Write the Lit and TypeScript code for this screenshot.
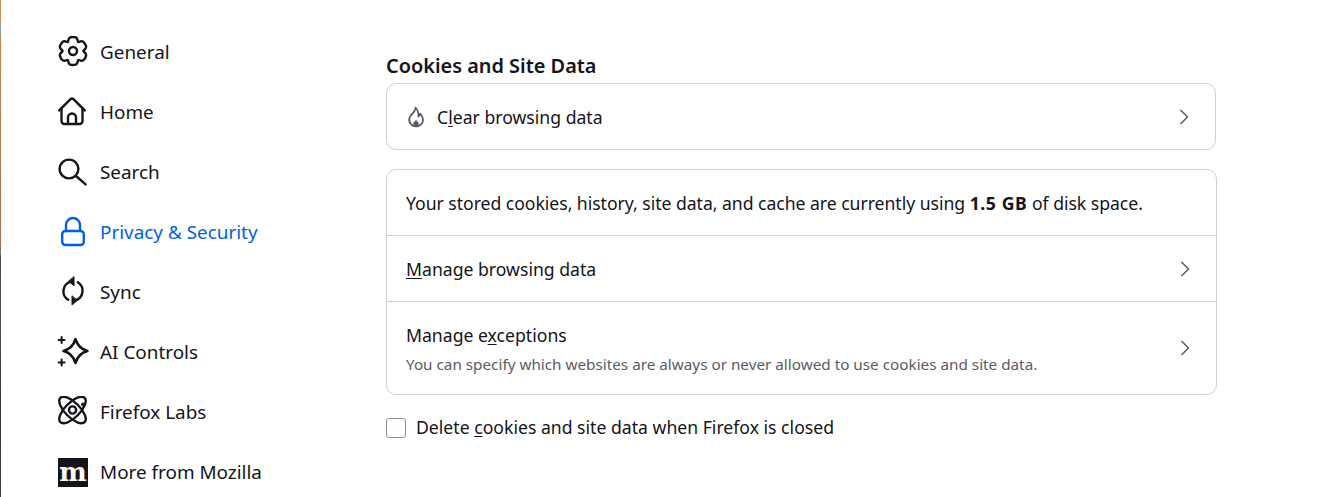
import { LitElement, html, css, svg } from "lit";
import { customElement } from "lit/decorators.js";

function gearPath(): string {
  const cx = 16, cy = 15, n = 6;
  const pts: string[] = [];
  for (let i = 0; i < n; i++) {
    const a = ((-90 + (360 / n) * i) * Math.PI) / 180;
    const s = (Math.PI * 2) / n;
    const p = (r: number, t: number) =>
      `${(cx + r * Math.cos(a + t)).toFixed(2)} ${(cy + r * Math.sin(a + t)).toFixed(2)}`;
    pts.push(
      `${i === 0 ? "M" : "L"}${p(10.9, -0.46)}`,
      `C${p(12.4, -0.38)} ${p(13.3, -0.36)} ${p(13.9, -0.2)}`,
      `Q${p(14.5, 0)} ${p(13.9, 0.2)}`,
      `C${p(13.3, 0.36)} ${p(12.4, 0.38)} ${p(10.9, 0.46)}`,
      `Q${p(10, s / 2)} ${p(10.9, s - 0.46)}`
    );
  }
  return pts.join(" ") + "Z";
}

const icons = {
  gear: svg`<path d=${gearPath()}/><circle cx="16" cy="15" r="4"/>`,
  home: svg`<path d="M2.2 14.4 13.6 3.2a2 2 0 0 1 2.8 0l11.4 11.2"/><path d="M4.5 12.5V25a3 3 0 0 0 3 3h15a3 3 0 0 0 3-3V12.5"/><path d="M11 28v-6.5a4 4 0 0 1 8 0V28"/>`,
  search: svg`<circle cx="12" cy="13" r="9.4"/><path d="M19 20 28.6 28.4"/>`,
  lock: svg`<rect x="5.2" y="15" width="21.6" height="14" rx="3.2"/><path d="M9 15V9a7 7 0 0 1 14 0v6"/>`,
  sync: svg`<path d="M14 5.6A10 10 0 0 0 11.2 23.8"/><path d="M18 24.4A10 10 0 0 0 20.8 6.2"/><path class="solid" d="M17 1 17 9.8 11.8 5.4Z"/><path class="solid" d="M15 20.2 15 29 20.2 24.6Z"/>`,
  ai: svg`<path class="bold" d="M18.5 3.2C20.4 9.4 23.8 13.1 30.4 15 23.8 16.9 20.4 20.6 18.5 26.8 16.6 20.6 13.2 16.9 6.6 15 13.2 13.1 16.6 9.4 18.5 3.2Z"/><path class="thin" d="M4.6 1V7M1.6 4H7.6M4.6 23.4V29.4M1.6 26.4H7.6"/>`,
  labs: svg`<ellipse cx="15.5" cy="14" rx="17.2" ry="7.4" transform="rotate(45 15.5 14)"/><ellipse cx="15.5" cy="14" rx="17.2" ry="7.4" transform="rotate(-45 15.5 14)"/><circle cx="15.5" cy="14" r="3.6"/><circle class="solid" cx="26" cy="8.4" r="1.5"/>`,
};

const nav: [string, keyof typeof icons | "moz", boolean?][] = [
  ["General", "gear"],
  ["Home", "home"],
  ["Search", "search"],
  ["Privacy & Security", "lock", true],
  ["Sync", "sync"],
  ["AI Controls", "ai"],
  ["Firefox Labs", "labs"],
  ["More from Mozilla", "moz"],
];

const chevron = html`<svg class="chev" viewBox="0 0 10 16" width="10" height="16"><path d="M1.5 1 8.5 8 1.5 15"/></svg>`;

@customElement("app-root")
export class AppRoot extends LitElement {
  static styles = css`
    :host {
      display: grid;
      grid-template-columns: 1px 385px 830.5px;
      height: 497px;
      overflow: hidden;
      background: #fff;
      color: #15141a;
      font-family: "Noto Sans", "Open Sans", sans-serif;
      font-size: 17.64px;
    }
    .strip {
      background: linear-gradient(
        to bottom,
        #c48d52 0,
        #c48d52 26px,
        #73a9c0 26px,
        #73a9c0 33px,
        #c08850 33px,
        #ae7450 200px,
        #a8704f 246px,
        #6b6260 247px,
        #8f8b88 253px,
        #4d4848 256px,
        #4f4a4c 330px,
        #3a3a3c 400px,
        #3f3f44 497px
      );
    }
    .sidebar {
      display: flex;
      flex-direction: column;
      padding: 22px 0 0 56px;
      font-size: 18.9px;
    }
    .nav {
      display: flex;
      align-items: center;
      gap: 11px;
      height: 60px;
      flex: none;
      white-space: nowrap;
    }
    .nav.on {
      color: #0061e0;
    }
    .ico {
      width: 32px;
      height: 32px;
      flex: none;
      fill: none;
      stroke: currentColor;
      stroke-width: 2.4;
      stroke-linecap: round;
      stroke-linejoin: round;
    }
    .ico .solid {
      fill: currentColor;
      stroke-width: 1;
    }
    .ico .thin {
      stroke-width: 2;
    }
    .ico .bold {
      stroke-width: 2.7;
    }
    .moz {
      width: 30px;
      height: 29px;
      margin: 1px 1px 0 1px;
      flex: none;
      background: #15141a;
      color: #fff;
      display: flex;
      align-items: center;
      justify-content: center;
      font: bold 26px/29px "DejaVu Serif", serif;
    }
    main {
      display: flex;
      flex-direction: column;
      padding-top: 52px;
    }
    h2 {
      margin: 0 0 3px;
      font-size: 19.9px;
      font-weight: 600;
      line-height: 28px;
    }
    .card {
      border: 1px solid #cfcfd8;
      border-radius: 10px;
      display: flex;
      flex-direction: column;
    }
    .first {
      margin-bottom: 19px;
      margin-right: 0.5px;
    }
    .row {
      display: flex;
      align-items: center;
      padding: 0 26px 0 19px;
      height: 65px;
      flex: none;
    }
    .row + .row {
      border-top: 1px solid #cfcfd8;
    }
    .first .row {
      height: 65px;
      padding-left: 20px;
    }
    .tall {
      height: 92px;
    }
    .tall .grow {
      padding-top: 1px;
    }
    .grow {
      flex: 1;
    }
    .flame {
      width: 18px;
      height: 22px;
      margin-right: 12px;
      flex: none;
      fill: none;
      stroke: #5b5b66;
      stroke-width: 1.7;
      stroke-linejoin: round;
      stroke-linecap: round;
    }
    .flame .core {
      fill: #5b5b66;
      stroke: none;
    }
    .chev {
      fill: none;
      stroke: #5b5b66;
      stroke-width: 1.5;
      flex: none;
    }
    .sub {
      margin-top: 7px;
      font-size: 15.27px;
      color: #5b5b66;
    }
    .check {
      display: flex;
      align-items: center;
      gap: 10px;
      margin-top: 21px;
    }
    .check .lbl {
      margin-top: -1px;
    }
    .box {
      width: 18px;
      height: 18px;
      border: 1px solid #8f8f9d;
      border-radius: 3px;
      flex: none;
    }
    u {
      text-underline-offset: 2px;
      text-decoration-thickness: 1px;
    }
    .usage {
      letter-spacing: -0.04px;
    }
    b {
      font-weight: 700;
      letter-spacing: 0.6px;
    }
  `;

  render() {
    return html`
      <div class="strip"></div>
      <nav class="sidebar">
        ${nav.map(
          ([label, icon, on]) => html`
            <div class="nav ${on ? "on" : ""}">
              ${icon === "moz"
                ? html`<div class="moz">m</div>`
                : html`<svg class="ico" viewBox="0 0 32 32">${icons[icon]}</svg>`}
              <span>${label}</span>
            </div>
          `
        )}
      </nav>
      <main>
        <h2>Cookies and Site Data</h2>
        <div class="card first">
          <div class="row">
            <svg class="flame" viewBox="0 0 18 22">
              <path d="M8.5 1.5C9 5.5 4 8 2.6 11.5 1 15.8 4.2 20.5 9 20.5s8-4.4 6.6-8.8c-.6-1.9-1.6-3-2.6-4-.2 1.4-.8 2.3-1.6 2.8C11.6 7 10.6 3.6 8.5 1.5Z"/>
              <path class="core" d="M9 14c-1.2 1.2-2.8 2.4-2.8 4.2 0 1.5 1.2 2.4 2.8 2.4s2.8-.9 2.8-2.4c0-1.8-1.6-3-2.8-4.2Z"/>
            </svg>
            <span class="grow">C<u>l</u>ear browsing data</span>
            ${chevron}
          </div>
        </div>
        <div class="card">
          <div class="row">
            <span class="usage">Your stored cookies, history, site data, and cache are currently using <b>1.5 GB</b> of disk space.</span>
          </div>
          <div class="row">
            <span class="grow"><u>M</u>anage browsing data</span>
            ${chevron}
          </div>
          <div class="row tall">
            <div class="grow">
              <div>Manage e<u>x</u>ceptions</div>
              <div class="sub">You can specify which websites are always or never allowed to use cookies and site data.</div>
            </div>
            ${chevron}
          </div>
        </div>
        <label class="check">
          <span class="box"></span>
          <span class="lbl">Delete <u>c</u>ookies and site data when Firefox is closed</span>
        </label>
      </main>
    `;
  }
}
